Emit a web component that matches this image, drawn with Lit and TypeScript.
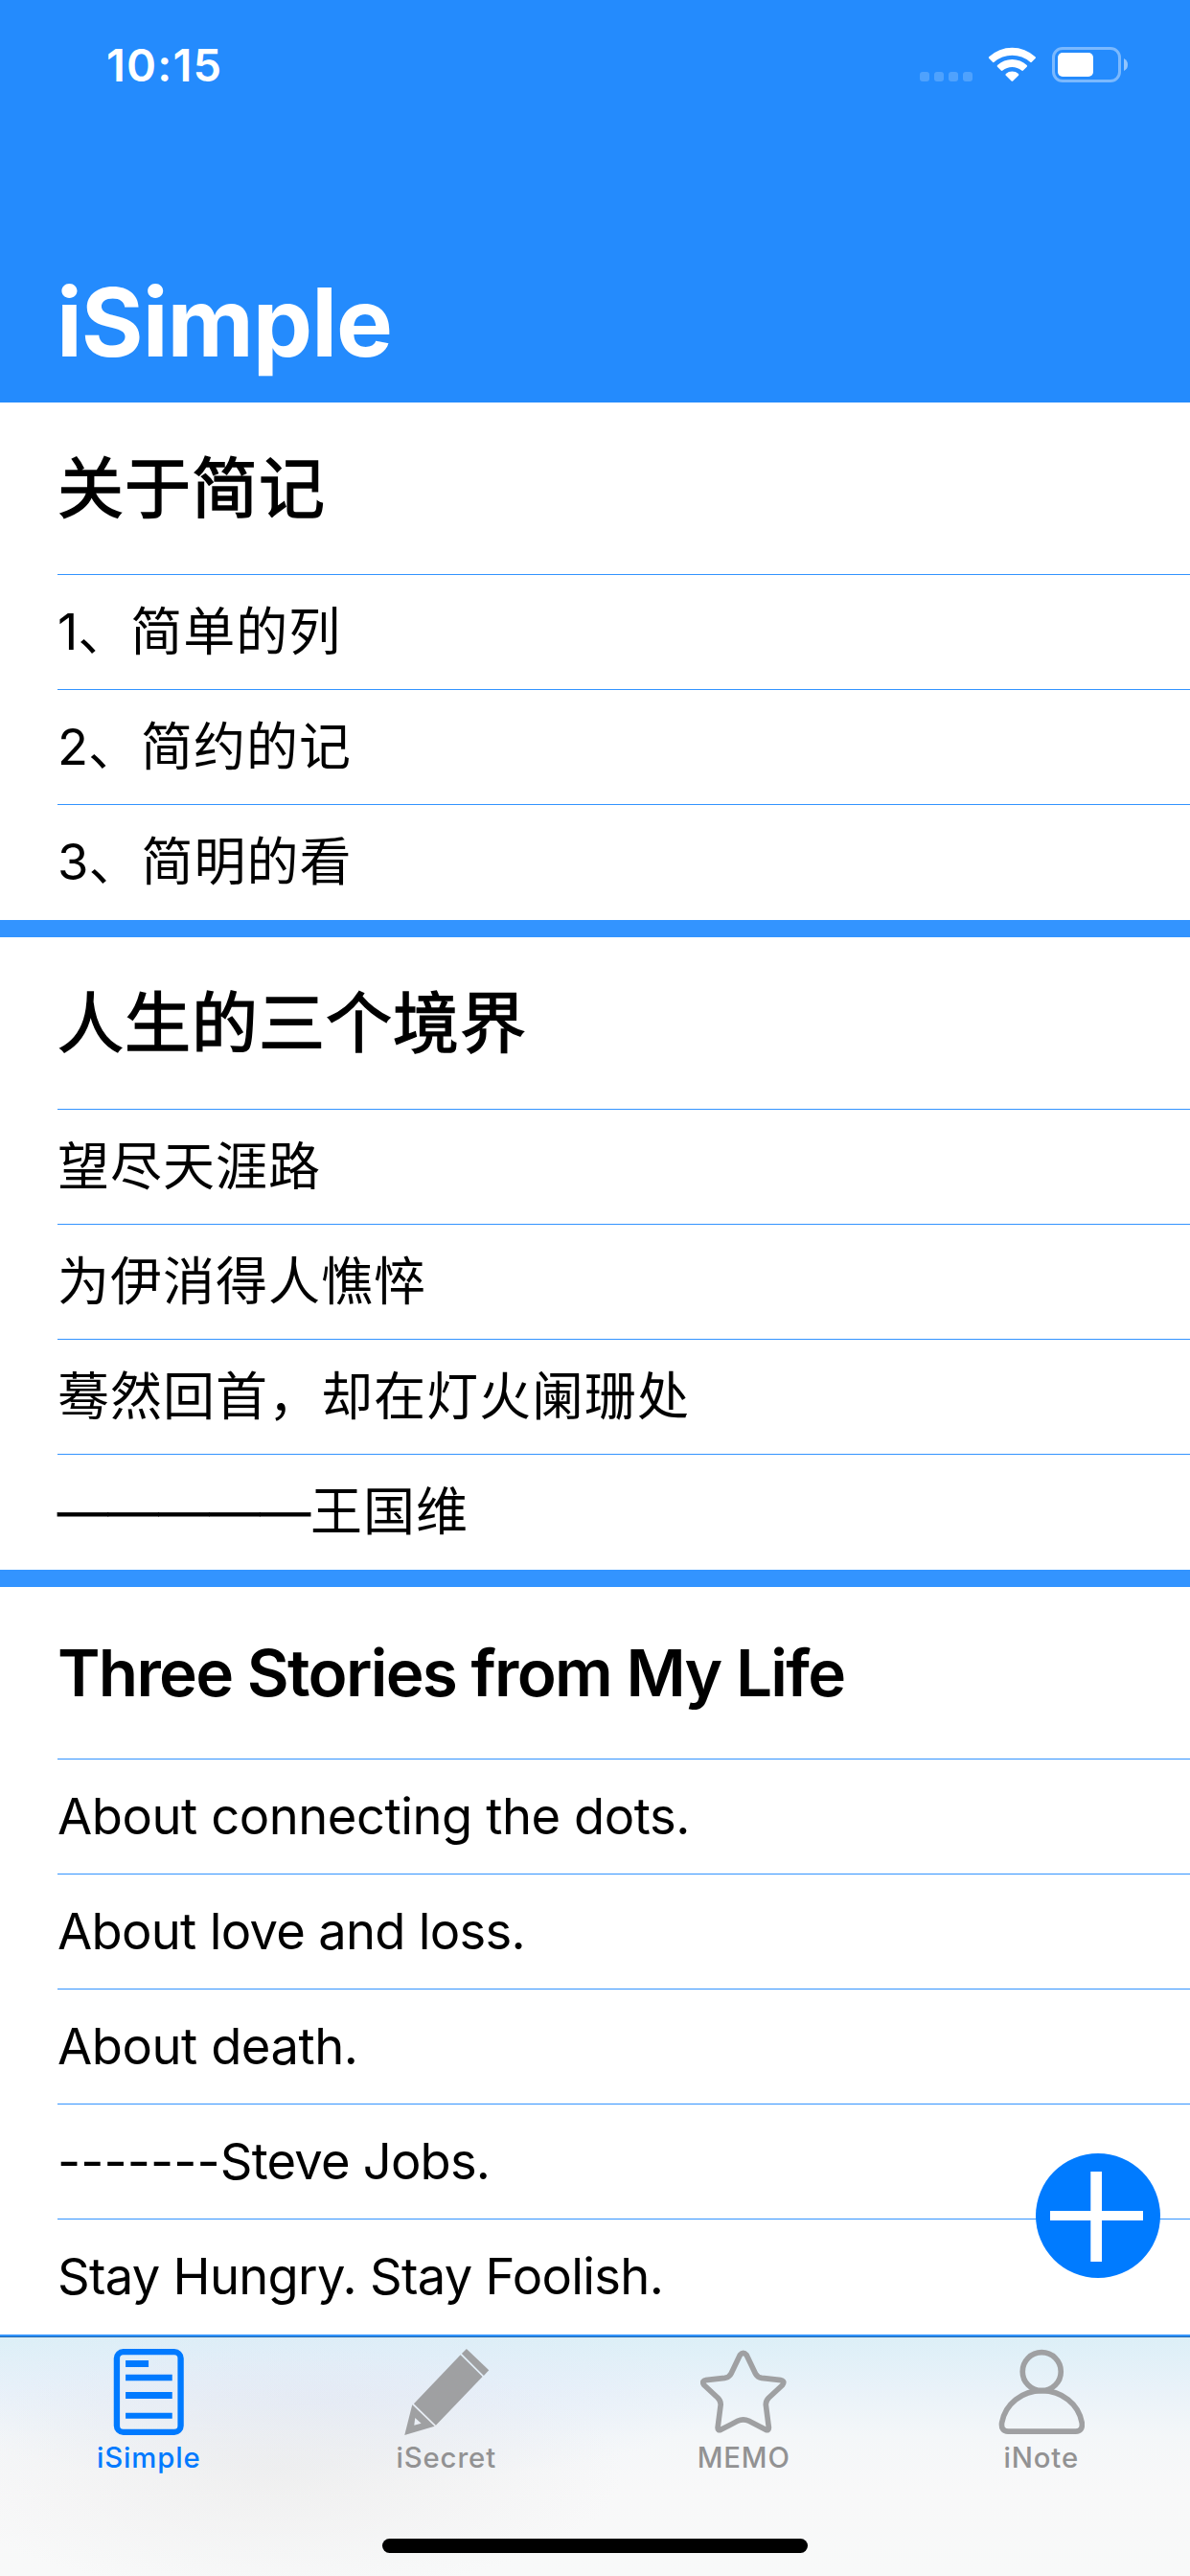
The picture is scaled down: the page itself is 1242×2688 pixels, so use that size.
import { LitElement, html, css, svg } from "lit";
import { customElement, property } from "lit/decorators.js";

interface Row { text: string; mark?: string; kind?: "latin" | "latin tight" | "hyphens" | "dashes"; }
interface Note { title: string; latin?: boolean; rows: Row[]; }

const NOTES: Note[] = [
  {
    title: "关于简记",
    rows: [
      { mark: "1", text: "、简单的列" },
      { mark: "2", text: "、简约的记" },
      { mark: "3", text: "、简明的看" },
    ],
  },
  {
    title: "人生的三个境界",
    rows: [
      { text: "望尽天涯路" },
      { text: "为伊消得人憔悴" },
      { text: "蓦然回首，却在灯火阑珊处" },
      { mark: "—————", text: "王国维", kind: "dashes" },
    ],
  },
  {
    title: "Three Stories from My Life",
    latin: true,
    rows: [
      { text: "About connecting the dots.", kind: "latin" },
      { text: "About love and loss.", kind: "latin tight" },
      { text: "About death.", kind: "latin" },
      { mark: "-------", text: "Steve Jobs.", kind: "hyphens" },
      { text: "Stay Hungry. Stay Foolish.", kind: "latin tight" },
    ],
  },
];

@customElement("status-bar")
class StatusBar extends LitElement {
  static styles = css`
    :host { display: flex; justify-content: space-between; height: 135px; padding: 0 65px 0 111px; box-sizing: border-box; color: #fff; }
    .time { font-size: 47px; font-weight: 600; line-height: 60px; padding-top: 38px; letter-spacing: 1.2px; }
    .icons { display: block; width: 217px; height: 38px; margin-top: 49px; }
  `;
  render() {
    return html`
      <div class="time">10:15</div>
      <svg class="icons" viewBox="960 49 217 38">
        <g fill="#fff" fill-opacity=".2">
          <rect x="960" y="75" width="10" height="10" rx="3"/>
          <rect x="975" y="75" width="10" height="10" rx="3"/>
          <rect x="990" y="75" width="10" height="10" rx="3"/>
          <rect x="1005" y="75" width="10" height="10" rx="3"/>
        </g>
        <g fill="#fff">
          <path d="M1032.2 59.2Q1031.4 60.2 1032.3 61.1L1036 64.8Q1036.7 65.5 1037.6 64.8A28.4 28.4 0 0 1 1075.2 64.8Q1076 65.5 1076.8 64.8L1080.5 61.1Q1081.4 60.2 1080.5 59.2A35.5 35.5 0 0 0 1032.2 59.2Z"/>
          <path d="M1041 68Q1040.2 69 1041 69.8L1044.8 73.5Q1045.6 74.3 1046.5 73.5A15.5 15.5 0 0 1 1066.2 73.5Q1067.1 74.3 1067.9 73.5L1071.7 69.8Q1072.6 69 1071.7 68A22.6 22.6 0 0 0 1041 68Z"/>
          <path d="M1049.8 76.9Q1049 77.8 1049.8 78.7L1055.6 84.5Q1056.4 85.2 1057.2 84.5L1063 78.7Q1063.8 77.8 1063 76.9A10 10 0 0 0 1049.8 76.9Z"/>
          <rect x="1104" y="55" width="37" height="25" rx="5"/>
          <path fill-opacity=".5" d="M1173 61Q1177 63 1177 67.5T1173 74Z"/>
        </g>
        <rect x="1099.5" y="50.5" width="69" height="34" rx="9.5" fill="none" stroke="#fff" stroke-opacity=".4" stroke-width="3"/>
      </svg>`;
  }
}

@customElement("note-card")
class NoteCard extends LitElement {
  @property({ attribute: false }) note!: Note;
  static styles = css`
    :host { display: block; padding-left: 60px; background: #fff; color: #000; }
    .title { display: flex; align-items: center; height: 180px; box-sizing: border-box; border-bottom: 1px solid #3394ff; font-size: 69px; font-weight: 400; -webkit-text-stroke: 1.5px #000; letter-spacing: 1px; line-height: 80px; white-space: pre; }
    .title.latin { font-size: 67.5px; font-weight: 600; -webkit-text-stroke: 0; letter-spacing: -1.7px; padding-top: 1px; }
    .row { display: flex; align-items: center; height: 120px; box-sizing: border-box; padding-top: 1px; border-bottom: 1px solid #3394ff; white-space: pre; font-size: 54px; line-height: 64px; letter-spacing: 1px; }
    .row:last-child { border-bottom-color: transparent; }
    .latin, .hyphens { font-size: 52.5px; letter-spacing: -0.45px; padding-top: 0; padding-bottom: 1px; }
    .tight { letter-spacing: -0.7px; }
    .hyphens .text { letter-spacing: -0.8px; }
    .digit { font-size: 52.5px; letter-spacing: 0; padding-bottom: 2px; }
    .hyphens .digit { letter-spacing: 0.1px; padding-bottom: 0; }
    .dashes .digit { font-family: "Liberation Sans", sans-serif; font-size: 52.8px; padding-bottom: 4px; -webkit-text-stroke: 0.8px #000; }
  `;
  render() {
    return html`
      <div class="title ${this.note.latin ? "latin" : ""}">${this.note.title}</div>
      ${this.note.rows.map((r) => html`<div class="row ${r.kind ?? ""}">${r.mark ? html`<span class="digit">${r.mark}</span>` : null}<span class="text">${r.text}</span></div>`)}`;
  }
}

const TABS = [
  {
    label: "iSimple", box: "150.75 93 270 270",
    icon: svg`<rect x="186.5" y="102.5" width="200" height="251" rx="20" fill="none" stroke="currentColor" stroke-width="19"/>
      <path fill="currentColor" d="M214 129h72v21h-72zM214 173h146v20h-146zM214 228h146v21h-146zM214 293h146v18h-146z"/>`,
  },
  {
    label: "iSecret", box: "1082.25 93 270 270",
    icon: svg`<path fill="currentColor" fill-rule="evenodd" d="M1280 93L1350 160L1334 177L1265 108ZM1261 112L1330 180L1184 332L1115 265ZM1110 268L1180 335L1086 363ZM1119 309L1138 326L1116 332Z"/>`,
  },
  {
    label: "MEMO", box: "153.75 93 270 270",
    icon: svg`<path fill="none" stroke="currentColor" stroke-width="17" stroke-linejoin="round" d="M278 112Q288 100 298 112L326 170Q332 182 346 184L406 191Q420 194 410 207L368 246Q357 257 359 270L368 340Q368 350 358 346L306 319Q288 310 270 319L218 346Q208 350 208 340L217 270Q219 257 208 246L166 207Q156 194 170 191L230 184Q244 182 250 170Z"/>`,
  },
  {
    label: "iNote", box: "1085.25 93 270 270",
    icon: svg`<g fill="none" stroke="currentColor" stroke-width="17"><circle cx="1221" cy="164" r="60"/><path d="M1116 351.500Q1093 350 1096 325C1106 265 1160 224 1221.500 224C1283 224 1337 265 1347 325Q1350 350 1327 351.500Z"/></g>`,
  },
];

@customElement("tab-bar")
class TabBar extends LitElement {
  static styles = css`
    :host {
      display: flex; flex-direction: column; height: 252px; box-sizing: border-box;
      border-top: 2px solid #3394ff;
      background:
        radial-gradient(ellipse 360px 130px at 290px 140px, rgba(234, 234, 234, .65), rgba(240, 240, 240, 0)),
        radial-gradient(ellipse 420px 90px at 330px 65px, rgba(224, 232, 248, .7), rgba(224, 232, 248, 0)),
        linear-gradient(#dceff7, #e9f2f9 55px, #f4f7f9 105px, #f8f8f9 160px, #f8f9f9);
    }
    .edge { height: 1px; background: #1d65ac; }
    .tabs { display: grid; grid-template-columns: repeat(4, 1fr); padding-top: 12px; height: 198px; box-sizing: border-box; }
    .tab { display: flex; flex-direction: column; align-items: center; color: #9fa0a2; }
    .icon { display: block; width: 90px; height: 90px; }
    .label { margin-top: 6px; font-size: 29.3px; line-height: 36px; font-weight: 450; letter-spacing: .9px; color: #929293; }
    .active, .active .label { color: #007aff; }
    .home { width: 444px; height: 15px; border-radius: 8px; background: #000; align-self: center; margin-top: 12px; }
  `;
  render() {
    return html`
      <div class="edge"></div>
      <div class="tabs">
        ${TABS.map((t, i) => html`<div class="tab ${i === 0 ? "active" : ""}">
          <svg class="icon" viewBox=${t.box}>${t.icon}</svg>
          <span class="label">${t.label}</span>
        </div>`)}
      </div>
      <div class="home"></div>`;
  }
}

@customElement("app-root")
class AppRoot extends LitElement {
  static styles = css`
    :host { display: flex; flex-direction: column; position: relative; width: 1242px; height: 2688px; overflow: hidden; background: #fff; font-family: Inter, "Noto Sans CJK SC", sans-serif; }
    .head { height: 420px; background: #248bfd; box-sizing: border-box; }
    .brand { margin: 0; padding: 141px 0 0 59px; color: #fff; font-size: 99px; line-height: 120px; font-weight: 700; letter-spacing: -1px; }
    .list { display: flex; flex-direction: column; gap: 18px; background: #3394ff; height: 2016px; }
    .add { position: absolute; left: 1081px; top: 2247px; width: 130px; height: 130px; }
  `;
  render() {
    return html`
      <header class="head">
        <status-bar></status-bar>
        <h1 class="brand">iSimple</h1>
      </header>
      <main class="list">${NOTES.map((n) => html`<note-card .note=${n}></note-card>`)}</main>
      <tab-bar></tab-bar>
      <svg class="add" viewBox="0 0 130 130">
        <circle cx="65" cy="65" r="65" fill="#007bff"/>
        <path fill="#fff" d="M57.300 19H69v94H57.300zM15 60h97v10H15z"/>
      </svg>`;
  }
}
